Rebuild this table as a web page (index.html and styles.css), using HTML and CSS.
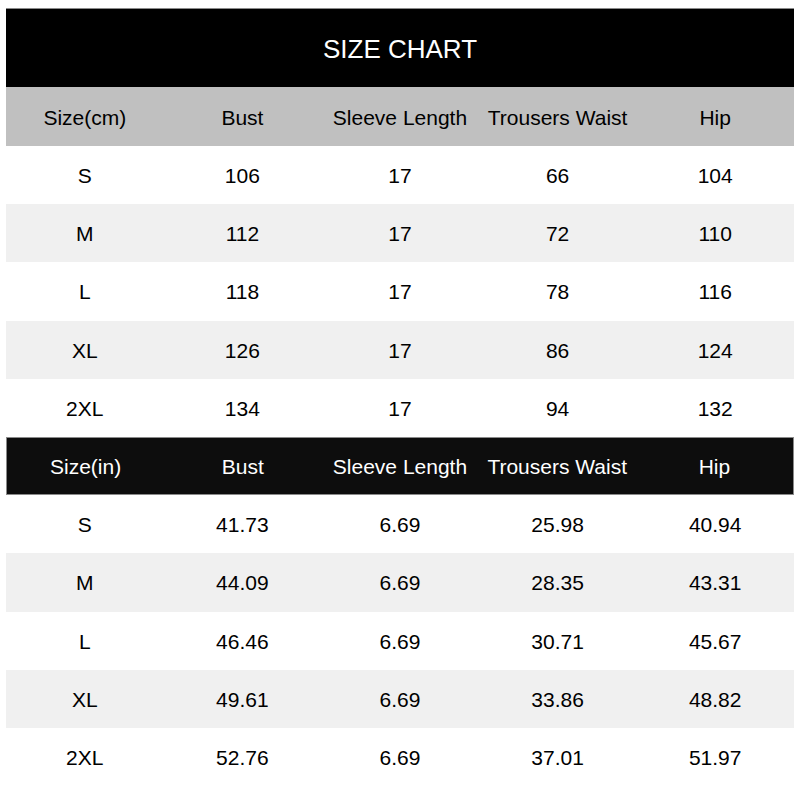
FILE: index.html
```html
<!DOCTYPE html>
<html>
<head>
<meta charset="utf-8">
<link rel="stylesheet" href="styles.css">
</head>
<body>
<div class="chart">
  <div class="title">SIZE CHART</div>
  <div class="row head-light"><div>Size(cm)</div><div>Bust</div><div>Sleeve Length</div><div>Trousers Waist</div><div>Hip</div></div>
  <div class="row"><div>S</div><div>106</div><div>17</div><div>66</div><div>104</div></div>
  <div class="row alt"><div>M</div><div>112</div><div>17</div><div>72</div><div>110</div></div>
  <div class="row"><div>L</div><div>118</div><div>17</div><div>78</div><div>116</div></div>
  <div class="row alt"><div>XL</div><div>126</div><div>17</div><div>86</div><div>124</div></div>
  <div class="row"><div>2XL</div><div>134</div><div>17</div><div>94</div><div>132</div></div>
  <div class="row head-dark"><div>Size(in)</div><div>Bust</div><div>Sleeve Length</div><div>Trousers Waist</div><div>Hip</div></div>
  <div class="row"><div>S</div><div>41.73</div><div>6.69</div><div>25.98</div><div>40.94</div></div>
  <div class="row alt"><div>M</div><div>44.09</div><div>6.69</div><div>28.35</div><div>43.31</div></div>
  <div class="row"><div>L</div><div>46.46</div><div>6.69</div><div>30.71</div><div>45.67</div></div>
  <div class="row alt"><div>XL</div><div>49.61</div><div>6.69</div><div>33.86</div><div>48.82</div></div>
  <div class="row"><div>2XL</div><div>52.76</div><div>6.69</div><div>37.01</div><div>51.97</div></div>
</div>
</body>
</html>
```
FILE: styles.css
```css
html, body {
  margin: 0;
  padding: 0;
  background: #ffffff;
}
body {
  font-family: "Liberation Sans", Arial, sans-serif;
  color: #000;
}
.chart {
  width: 788px;
  margin: 8px 0 0 6px;
  display: flex;
  flex-direction: column;
}
.title {
  height: 79px;
  background: #000;
  border-top: 1px solid #8a8a8a;
  box-sizing: border-box;
  padding-top: 2px;
  color: #fff;
  font-size: 26px;
  display: flex;
  align-items: center;
  justify-content: center;
}
.row {
  height: 58.2px;
  display: grid;
  grid-template-columns: repeat(5, 1fr);
  font-size: 21px;
}
.row > div {
  display: flex;
  align-items: center;
  justify-content: center;
  padding-top: 2px;
}
.alt {
  background: #f0f0f0;
}
.head-light {
  background: #c0c0c0;
  height: 59px;
}
.head-dark {
  background: #0d0d0d;
  color: #fff;
  border: 1px solid #8a8a8a;
  box-sizing: border-box;
}
```
